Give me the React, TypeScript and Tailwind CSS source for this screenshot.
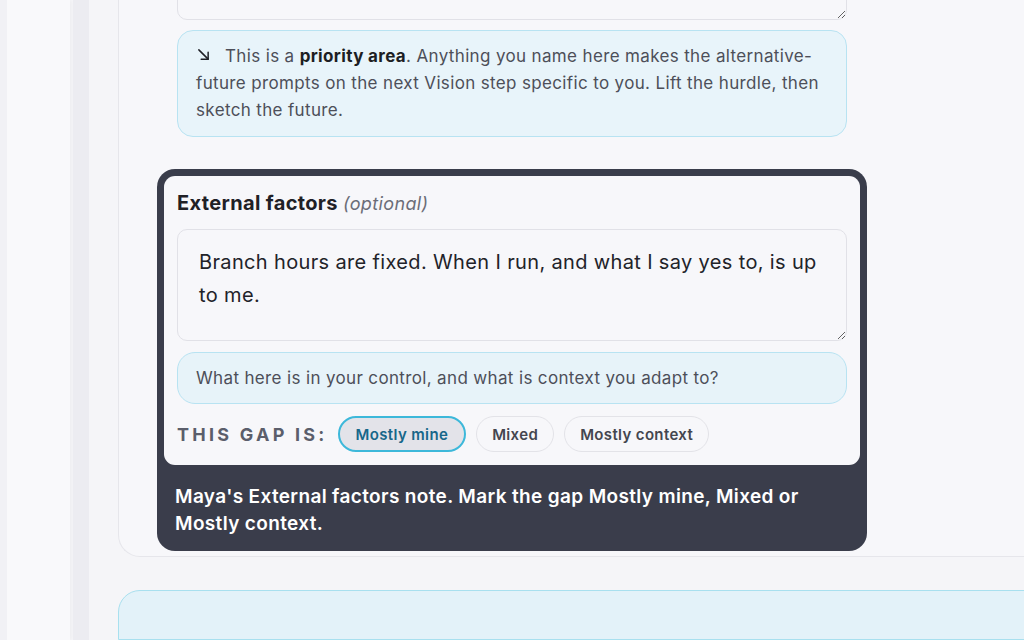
import React from 'react'

const font = { fontFamily: 'Inter, "Noto Sans", sans-serif' }

const choices = ['Mostly mine', 'Mixed', 'Mostly context']

const GapChoice: React.FC<{ label: string; active: boolean }> = ({ label, active }) => (
  <button
    className={`h-9 rounded-full text-[15px] font-semibold leading-none ${
      active
        ? 'border-2 border-[#3db8da] bg-[#e3e3e9] px-[16px] text-[#17678a]'
        : 'border border-[#e3e3e8] bg-[#f7f7fa] px-[15px] text-[#44464f]'
    }`}
  >
    {label}
  </button>
)

// thin down-right arrow used in the priority note
const ArrowDownRight = () => (
  <svg viewBox="0 0 14 14" className="ml-[1px] mr-[15px] inline-block h-[13px] w-[13px] -translate-y-[3px] align-middle" fill="none" stroke="#1f2026" strokeWidth="1.6" strokeLinecap="round" strokeLinejoin="round">
    <path d="M2 2 L12 12" />
    <path d="M12 4.5 V12 H4.5" />
  </svg>
)

export default function App() {
  return (
    <div className="flex h-[640px] w-full overflow-hidden bg-[#f5f5f8] tracking-[0.022em] text-[#2b2c33]" style={font}>
      {/* left rail */}
      <div className="w-[7px] shrink-0 bg-[#f1f1f5]" />
      <div className="w-[63px] shrink-0 bg-[#f9f9fb] shadow-[2px_0_4px_rgba(0,0,0,0.03)]" />
      <div className="w-[3px] shrink-0" />
      <div className="w-[16px] shrink-0 bg-[#ececf1]" />

      {/* main */}
      <div className="flex min-w-0 flex-1 flex-col pl-[29px]">
        <div className="-mr-10 rounded-b-[22px] border-b border-l border-[#e6e6eb] bg-[#f7f7fa] pb-[5px] pl-[58px]">
          <div className="w-[670px]">
            <textarea
              readOnly
              className="-mt-[92px] block h-[112px] w-full rounded-[10px] border border-[#e1e1e7] bg-[#f7f7fa] px-[21px] py-4 text-[20px] outline-none"
              defaultValue=""
            />

            <div className="mt-[10px] rounded-[16px] border border-[#b8e3f2] bg-[#e8f4fa] px-[18px] py-3 text-[17px] leading-[27px] text-[#4d4f59]">
              <ArrowDownRight />
              This is a <b className="font-bold text-[#1d1e23]">priority area</b>. Anything you name here makes the alternative-future
              prompts on the next Vision step specific to you. Lift the hurdle, then sketch the future.
            </div>

            {/* highlighted step */}
            <div className="-mx-5 mt-8 rounded-[18px] bg-[#3a3d4b] p-[7px]">
              <div className="rounded-[11px] bg-[#f7f7fa] px-[13px] pb-[13px] pt-[15px]">
                <div className="text-[20px] font-bold leading-[25px] text-[#1f2026]">
                  External factors <span className="text-[18px] font-normal italic text-[#6b6d78]">(optional)</span>
                </div>
                <textarea
                  readOnly
                  className="mt-[13px] block h-[112px] w-full resize-y rounded-[10px] border border-[#e1e1e7] bg-[#f7f7fa] px-[21px] py-4 text-[20px] leading-[33px] text-[#222329] outline-none"
                  defaultValue="Branch hours are fixed. When I run, and what I say yes to, is up to me."
                />
                <div className="mt-[11px] rounded-[18px] border border-[#b8e3f2] bg-[#e7f3f9] px-[18px] py-[12px] text-[17px] leading-[26px] text-[#4d4f59]">
                  What here is in your control, and what is context you adapt to?
                </div>
                <div className="mt-3 flex items-center gap-[10px]">
                  <span className="text-[18px] font-bold uppercase tracking-[0.18em] text-[#5b5e6b]">This gap is:</span>
                  {choices.map((c, i) => (
                    <GapChoice key={c} label={c} active={i === 0} />
                  ))}
                </div>
              </div>
              <p className="px-[11px] pb-[7px] pt-[18px] text-[19px] font-semibold leading-[27px] text-white">
                Maya's External factors note. Mark the gap Mostly mine, Mixed or Mostly context.
              </p>
            </div>
          </div>
        </div>

        <div className="-mr-10 mt-[33px] h-[120px] rounded-t-[22px] border border-[#a8e0ef] bg-[#e3f2f9]" />
      </div>
    </div>
  )
}
